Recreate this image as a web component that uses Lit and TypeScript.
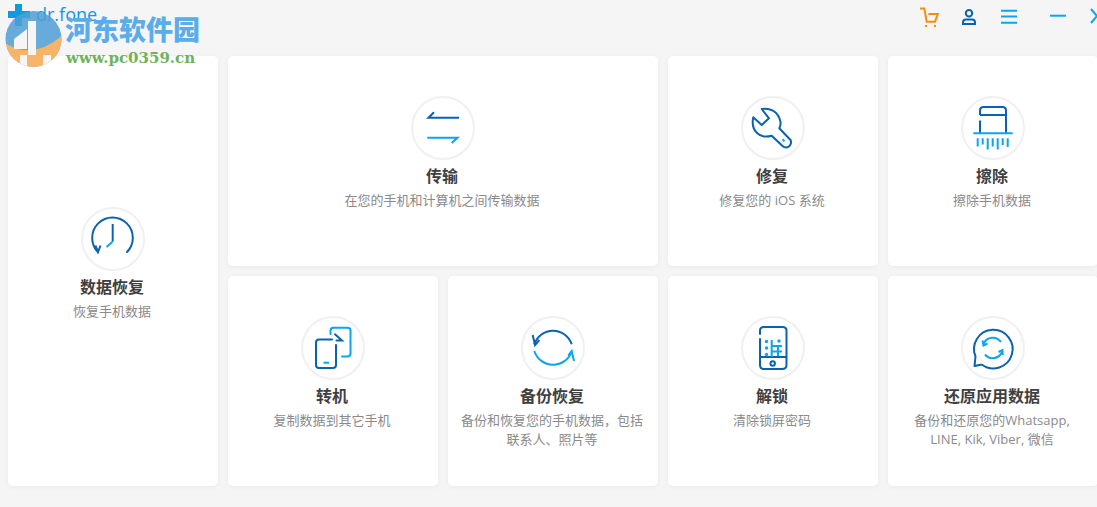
import { LitElement, html, css, svg } from "lit";
import { customElement } from "lit/decorators.js";

const D = "#0a62b0";
const L = "#0aa5ef";
const O = "#f98a14";

function icon(body: unknown) {
  return html`<div class="ring"><svg width="64" height="64" viewBox="0 0 64 64" fill="none" stroke-width="2">${body}</svg></div>`;
}

const icons = {
  clock: svg`
    <path d="M17 45 A20.300 20.300 0 1 1 46 45" stroke="${D}" stroke-linecap="round"/>
    <path d="M14.500 38.500 L17 45 L19.500 38.500" stroke="${D}"/>
    <path d="M31.700 17 V34.500" stroke="${D}"/>
    <path d="M31.700 34.500 L25.500 40" stroke="${L}"/>`,
  transfer: svg`
    <path d="M48 21.700 H17.500 L23 16.300" stroke="${D}"/>
    <path d="M16.300 41.700 H46.500 L40.700 47" stroke="${L}"/>`,
  wrench: svg`
    <path d="M12.300 21.300 L20.700 29 L28 22.300 L20.700 13 C28 11.500 37 15 39.300 25 C40 28 39.500 30 38.300 32.300 L49.500 44 C51 47 49 51.500 45 51.500 C43.500 51.500 42.500 51 41.500 50 L30.700 39.700 C26 41 20 41 16 37 C12 33 11 27 12.300 21.300 Z" stroke="${D}" stroke-linejoin="round"/>
    <path d="M41.500 43.200 L43.500 45.200" stroke="${L}"/>`,
  shredder: svg`
    <path d="M19 37 V24.500 M19 19 V14.500 Q19 11 22.500 11 H41.500 Q45 11 45 14.500 V37 M19 19 H45" stroke="${D}"/>
    <path d="M12.300 37.300 H51.700" stroke="${L}"/>
    <path d="M16.700 42.300 V50.500 M21.700 42.300 V48.500 M26.700 42.300 V53.500 M31.700 42.300 V50.500 M36.700 42.300 V53.500 M41.700 42.300 V49 M46.700 42.300 V51" stroke="${L}"/>`,
  phones: svg`
    <path d="M31 23.500 H18 Q15 23.500 15 26.500 V49 Q15 52 18 52 H32 Q35 52 35 49 V29" stroke="${D}" stroke-linecap="round"/>
    <path d="M22.500 46.700 H28" stroke="${L}"/>
    <path d="M29.500 18 V14.500 Q29.500 11.700 32.500 11.700 H46.500 Q49.500 11.700 49.500 14.500 V37.500 Q49.500 40.500 46.500 40.500 H41" stroke="${L}" stroke-linecap="round"/>
    <path d="M34 18.300 L41 24.500 H35.500" stroke="${D}" stroke-linecap="round"/>`,
  sync: svg`
    <path d="M13.300 28.300 A19.700 19.700 0 0 1 50.700 28.300" stroke="${D}"/>
    <path d="M11.700 19 L14 29 L18.300 24" stroke="${D}"/>
    <path d="M13.300 35 A19.700 19.700 0 0 0 50.700 35.500" stroke="${L}"/>
    <path d="M47.300 39.700 L50.700 35 L53 45" stroke="${L}"/>`,
  unlock: svg`
    <path d="M19 23 V49 Q19 53 23 53 H41 Q45.500 53 45.500 49 V14.500 Q45.500 11 41.500 11 H23 Q19 11 19 14.500 V18 M19 41 H45.500" stroke="${D}" stroke-linecap="round"/>
    <circle cx="31.700" cy="47.500" r="2.200" stroke="${D}"/>
    <path d="M30.700 24 V41 M37 29 V40 M30.700 30 H41 M30.700 35.500 H41" stroke="${L}"/>
    <circle cx="25.500" cy="25.500" r="1.700" fill="${L}" stroke="none"/>
    <circle cx="25.500" cy="32" r="1.700" fill="${L}" stroke="none"/>
    <circle cx="25.500" cy="38.500" r="1.700" fill="${L}" stroke="none"/>
    <circle cx="38" cy="25" r="1.700" fill="${L}" stroke="none"/>`,
  chat: svg`
    <path d="M20.700 48.500 A19.300 19.300 0 1 0 14.500 40.500 L13.500 50 L20.700 48.500" stroke="${D}" stroke-linejoin="round"/>
    <path d="M22.500 28 A10 10 0 0 1 40 26" stroke="${L}"/>
    <path d="M41 36 A10 10 0 0 1 24 38.500" stroke="${L}"/>
    <path d="M21.500 24.500 L22.500 29.500 L26.500 27.500 M41.700 39 L41.500 34 L37.500 36" stroke="${L}"/>`,
};

const cards = [
  { area: "left", icon: icons.clock, title: "数据恢复", desc: ["恢复手机数据"] },
  { area: "wide", icon: icons.transfer, title: "传输", desc: ["在您的手机和计算机之间传输数据"] },
  { area: "", icon: icons.wrench, title: "修复", desc: ["修复您的 iOS 系统"] },
  { area: "", icon: icons.shredder, title: "擦除", desc: ["擦除手机数据"] },
  { area: "", icon: icons.phones, title: "转机", desc: ["复制数据到其它手机"] },
  { area: "", icon: icons.sync, title: "备份恢复", desc: ["备份和恢复您的手机数据，包括", "联系人、照片等"] },
  { area: "", icon: icons.unlock, title: "解锁", desc: ["清除锁屏密码"] },
  { area: "", icon: icons.chat, title: "还原应用数据", desc: ["备份和还原您的Whatsapp,", "LINE, Kik, Viber, 微信"] },
];

@customElement("app-root")
export class AppRoot extends LitElement {
  static styles = css`
    :host {
      display: block;
      width: 1097px;
      height: 507px;
      overflow: hidden;
      position: relative;
      background: #f5f5f5;
      font-family: "Open Sans", "Noto Sans CJK SC", sans-serif;
    }
    .top {
      height: 56px;
      display: flex;
      align-items: flex-start;
      justify-content: space-between;
    }
    .brand {
      display: flex;
      gap: 6px;
      padding: 4px 0 0 8px;
      color: #0a9ae6;
      font-size: 18px;
      line-height: 20px;
    }
    .brand svg { display: block; }
    .tools {
      display: flex;
      flex: none;
      padding-top: 7px;
      margin-right: -1px;
    }
    .tools svg { display: block; flex: none; }
    .person { margin-left: 21px; }
    .menu { margin-left: 24px; }
    .min { margin-left: 33px; }
    .close { margin-left: 24px; }
    .grid {
      display: grid;
      grid-template-columns: repeat(5, 210px);
      grid-template-rows: 210px 210px;
      gap: 10px;
      padding-left: 8px;
      width: 1200px;
    }
    .card {
      background: #fff;
      border-radius: 5px;
      box-shadow: 0 1px 5px rgba(0, 0, 0, 0.05);
      display: flex;
      flex-direction: column;
      align-items: center;
      padding: 40px 10px 0;
      box-sizing: border-box;
    }
    .left { grid-row: span 2; justify-content: center; padding-top: 0; padding-bottom: 14px; }
    .wide { grid-column: span 2; }
    .ring {
      width: 64px;
      height: 64px;
      box-sizing: border-box;
      border: 2px solid #f0f0f0;
      border-radius: 50%;
      flex: none;
    }
    .ring svg { display: block; margin: -2px; }
    .title {
      margin: 1px 2px 0 0;
      font-size: 16px;
      font-weight: 700;
      line-height: 30px;
      color: #3f3f3f;
    }
    .desc {
      margin-right: 2px;
      font-size: 13px;
      line-height: 19px;
      color: #8a8a8a;
      text-align: center;
      white-space: nowrap;
    }
    .mark {
      position: absolute;
      left: 0;
      top: 0;
      pointer-events: none;
    }
    .mark svg { position: absolute; left: 5px; top: 11px; opacity: 0.85; }
    .wm1 {
      position: absolute;
      left: 65px;
      top: 12px;
      font: 900 27px/34px "Noto Sans CJK SC", sans-serif;
      color: #5bade9;
      white-space: nowrap;
    }
    .wm2 {
      position: absolute;
      left: 66px;
      top: 48px;
      font: 700 15px/20px "DejaVu Serif", serif;
      color: #6cb45a;
      white-space: nowrap;
    }
  `;

  render() {
    return html`
      <div class="top">
        <div class="brand">
          <svg width="22" height="22" viewBox="0 0 22 22"><path d="M7 0 H14 V7 H22 V14 H14 V22 H7 V14 H0 V7 H7 Z" fill="#0a9ae6"/></svg>
          <span>dr.fone</span>
        </div>
        <div class="tools">
          <svg width="20" height="20" viewBox="0 0 20 20" fill="none">
            <path d="M0 1.500 H4.300 L6.700 14.700 H15 L17.800 7 H8.300" stroke="${O}" stroke-width="2"/>
            <path d="M5 19 H7 M14 19 H16" stroke="${O}" stroke-width="2"/>
          </svg>
          <svg class="person" width="16" height="20" viewBox="0 0 16 20" fill="none">
            <circle cx="8" cy="6.300" r="3.200" stroke="${D}" stroke-width="2"/>
            <path d="M2 17 V15.500 Q2 12.500 5 12.500 H11 Q14 12.500 14 15.500 V17 Z" stroke="${D}" stroke-width="2"/>
          </svg>
          <svg class="menu" width="16" height="20" viewBox="0 0 16 20" fill="none">
            <path d="M0 3.700 H16 M0 9.500 H16 M0 15.700 H16" stroke="${L}" stroke-width="2"/>
          </svg>
          <svg class="min" width="16" height="20" viewBox="0 0 16 20" fill="none">
            <path d="M0 8.700 H16" stroke="${L}" stroke-width="2"/>
          </svg>
          <svg class="close" width="8" height="20" viewBox="0 0 8 20" fill="none">
            <path d="M1 2 L7 9 L1 16" stroke="${L}" stroke-width="2"/>
          </svg>
        </div>
      </div>
      <div class="grid">
        ${cards.map(
          (c) => html`
            <div class="card ${c.area}">
              ${icon(c.icon)}
              <div class="title">${c.title}</div>
              <div class="desc">${c.desc.map((l) => html`<div>${l}</div>`)}</div>
            </div>
          `
        )}
      </div>
      <div class="mark">
        <svg width="58" height="56" viewBox="0 0 58 56">
          <defs><clipPath id="c"><circle cx="28.500" cy="28" r="28"/></clipPath></defs>
          <g clip-path="url(#c)">
            <rect width="58" height="56" fill="#4f9fd6"/>
            <path d="M0 32 Q28 50 58 24 V56 H0 Z" fill="#f7a94f"/>
            <path d="M9 28 L22 18 V38 H9 Z" fill="#f5f5f5"/>
            <path d="M23 10 H31 V44 H23 Z" fill="#f5f5f5"/>
            <path d="M15 44 H22 V56 H15 Z" fill="#f5f5f5"/>
            <path d="M38 44 H46 V56 H38 Z" fill="#f5f5f5"/>
          </g>
        </svg>
        <div class="wm1">河东软件园</div>
        <div class="wm2">www.pc0359.cn</div>
      </div>
    `;
  }
}
